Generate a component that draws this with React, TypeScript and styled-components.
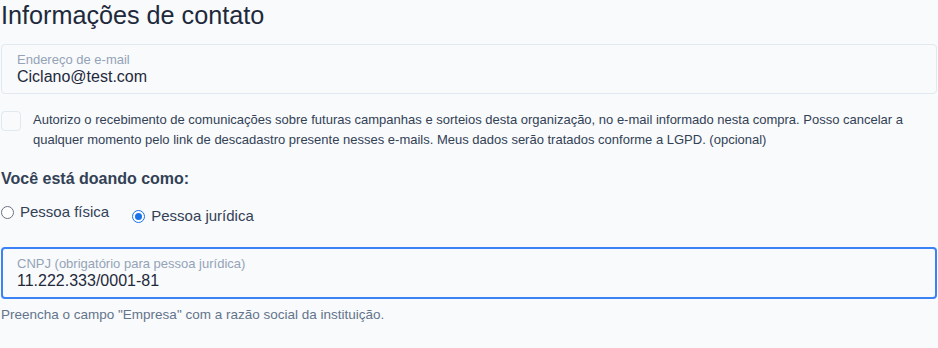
import React from "react";
import styled, { createGlobalStyle } from "styled-components";

const Global = createGlobalStyle`
  html, body { margin: 0; padding: 0; background: #f8fafc; }
  body { font-family: "Liberation Sans", Arial, sans-serif; color: #1e293b; }
  * { box-sizing: border-box; }
`;

const Page = styled.div`
  width: 938px;
  padding: 0 1px;
  display: flex;
  flex-direction: column;
`;

const Title = styled.h2`
  margin: 0;
  padding-top: 1px;
  font-size: 25.2px;
  font-weight: 400;
  line-height: 28px;
  color: #1e293b;
`;

const Field = styled.div<{ $focused?: boolean }>`
  margin-top: ${(p) => (p.$focused ? "0" : "15px")};
  height: ${(p) => (p.$focused ? "52px" : "50px")};
  border: ${(p) => (p.$focused ? "2px solid #3b82f6" : "1px solid #e2e8f0")};
  border-radius: 4px;
  background: #f9fafb;
  display: flex;
  flex-direction: column;
  justify-content: center;
  padding-left: ${(p) => (p.$focused ? "14px" : "15px")};
`;

const FieldLabel = styled.span`
  font-size: 13px;
  line-height: 15px;
  color: #94a3b8;
`;

const FieldValue = styled.span`
  font-size: 16px;
  line-height: 19px;
  color: #1e293b;
`;

const ConsentRow = styled.label`
  margin-top: 16px;
  display: flex;
  align-items: flex-start;
  gap: 12px;
`;

const Box = styled.span`
  flex: none;
  width: 20px;
  height: 20px;
  margin-top: 1px;
  border: 1px solid #e2e8f0;
  border-radius: 4px;
  background: #f9fafb;
`;

const ConsentText = styled.span`
  font-size: 13px;
  line-height: 20px;
  color: #334155;
`;

const Heading = styled.div`
  margin-top: 19px;
  font-size: 16px;
  font-weight: 700;
  line-height: 20px;
  color: #334155;
`;

const RadioRow = styled.div`
  margin-top: 13px;
  display: flex;
  align-items: flex-start;
  gap: 23px;
  height: 45px;
  padding-left: 0;
`;

const RadioLabel = styled.label<{ $offset?: number }>`
  display: flex;
  align-items: center;
  gap: 6px;
  margin-top: ${(p) => p.$offset ?? 0}px;
  font-size: 15px;
  line-height: 20px;
  color: #334155;
`;

const Radio = styled.span<{ $checked?: boolean }>`
  width: 13px;
  height: 13px;
  border-radius: 50%;
  border: 1px solid ${(p) => (p.$checked ? "#1a73e8" : "#6b7280")};
  background: #fff;
  display: flex;
  align-items: center;
  justify-content: center;
  &::after {
    content: "";
    display: ${(p) => (p.$checked ? "block" : "none")};
    width: 7px;
    height: 7px;
    border-radius: 50%;
    background: #1a73e8;
  }
`;

const Help = styled.div`
  margin-top: 8px;
  font-size: 13.5px;
  line-height: 16px;
  color: #64748b;
`;

export default function App() {
  return (
    <>
      <Global />
      <Page>
        <Title>Informações de contato</Title>
        <Field>
          <FieldLabel>Endereço de e-mail</FieldLabel>
          <FieldValue>Ciclano@test.com</FieldValue>
        </Field>
        <ConsentRow>
          <Box />
          <ConsentText>
            Autorizo o recebimento de comunicações sobre futuras campanhas e sorteios desta organização, no e-mail informado nesta compra. Posso cancelar a qualquer momento pelo link de descadastro presente nesses e-mails. Meus dados serão tratados conforme a LGPD. (opcional)
          </ConsentText>
        </ConsentRow>
        <Heading>Você está doando como:</Heading>
        <RadioRow>
          <RadioLabel>
            <Radio />
            Pessoa física
          </RadioLabel>
          <RadioLabel $offset={4}>
            <Radio $checked />
            Pessoa jurídica
          </RadioLabel>
        </RadioRow>
        <Field $focused>
          <FieldLabel>CNPJ (obrigatório para pessoa jurídica)</FieldLabel>
          <FieldValue>11.222.333/0001-81</FieldValue>
        </Field>
        <Help>Preencha o campo "Empresa" com a razão social da instituição.</Help>
      </Page>
    </>
  );
}
